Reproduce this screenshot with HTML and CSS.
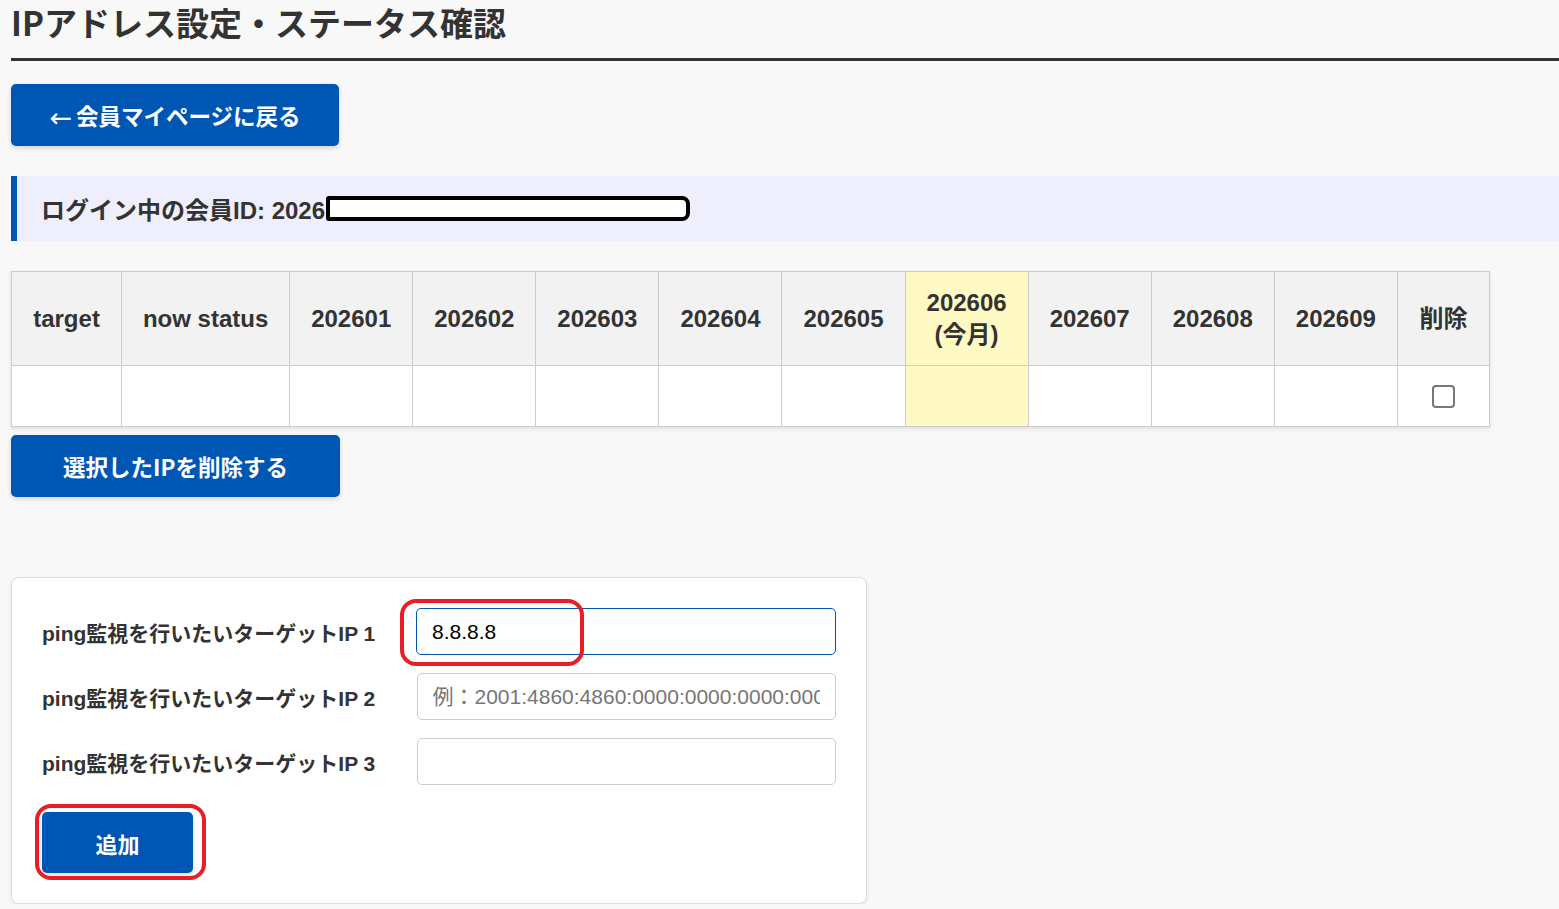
FILE: index.html
```html
<!DOCTYPE html>
<html lang="ja">
<head>
    <meta charset="UTF-8">
    <title>IPアドレス設定・ステータス確認</title>
    <link rel="stylesheet" href="styles.css">
</head>
<body>

<!--ページタイトル-->
<h1 class="page-title">IPアドレス設定・ステータス確認</h1>

<!--戻るボタン-->
<a class="btn btn-back" href="#"><span class="arrow">←</span>会員マイページに戻る</a>

<!--ログイン情報-->
<div class="login-info">
    ログイン中の会員ID: 2026<span class="masked"></span>
</div>

<!--ステータス一覧-->
<form class="status-form">
    <table class="status-table">
        <colgroup>
            <col class="col-target">
            <col class="col-status">
            <col class="col-month">
            <col class="col-month">
            <col class="col-month">
            <col class="col-month">
            <col class="col-month">
            <col class="col-month">
            <col class="col-month">
            <col class="col-month">
            <col class="col-month">
            <col class="col-delete">
        </colgroup>
        <thead>
        <tr>
            <th>target</th>
            <th>now status</th>
            <th>202601</th>
            <th>202602</th>
            <th>202603</th>
            <th>202604</th>
            <th>202605</th>
            <th class="current">202606<br>(今月)</th>
            <th>202607</th>
            <th>202608</th>
            <th>202609</th>
            <th>削除</th>
        </tr>
        </thead>
        <tbody>
        <tr>
            <td></td>
            <td></td>
            <td></td>
            <td></td>
            <td></td>
            <td></td>
            <td></td>
            <td class="current"></td>
            <td></td>
            <td></td>
            <td></td>
            <td><input type="checkbox" class="check"></td>
        </tr>
        </tbody>
    </table>

    <button type="button" class="btn btn-delete">選択したIPを削除する</button>
</form>

<!--ターゲットIP登録-->
<div class="card">
    <div class="field">
        <label class="field-label">ping監視を行いたいターゲットIP 1</label>
        <div class="field-wrap">
            <input class="field-input focused" type="text" value="8.8.8.8">
            <span class="mark mark-input"></span>
        </div>
    </div>
    <div class="field">
        <label class="field-label">ping監視を行いたいターゲットIP 2</label>
        <input class="field-input" type="text" placeholder="例：2001:4860:4860:0000:0000:0000:0000:8888">
    </div>
    <div class="field">
        <label class="field-label">ping監視を行いたいターゲットIP 3</label>
        <input class="field-input" type="text">
    </div>

    <div class="add-wrap">
        <button type="button" class="btn btn-add">追加</button>
        <span class="mark mark-add"></span>
    </div>
</div>

</body>
</html>
```

FILE: styles.css
```css
/*基本設定*/
* {
    margin: 0;
    padding: 0;
    box-sizing: border-box;
}

body {
    background-color: #f8f8f8;
    color: #333;
    font-family: "Liberation Sans", "Noto Sans CJK JP", sans-serif;
    padding-left: 11px;
}

/*タイトル*/
.page-title {
    font-family: "Noto Sans CJK JP", sans-serif;
    font-size: 33px;
    font-weight: bold;
    line-height: 44px;
    padding-bottom: 14px;
    border-bottom: 3px solid #333;
}

/*ボタン共通*/
.btn {
    display: flex;
    align-items: center;
    justify-content: center;
    background-color: #0057b3;
    color: #fff;
    border: none;
    border-radius: 5px;
    font-family: "Noto Sans CJK JP", sans-serif;
    font-size: 22.5px;
    font-weight: bold;
    text-decoration: none;
    box-shadow: 0 2px 5px rgba(0, 0, 0, 0.15);
}

.btn-back {
    width: 328px;
    height: 62px;
    margin-top: 23px;
}

.arrow {
    font-family: "DejaVu Sans", sans-serif;
    font-weight: normal;
    font-size: 27px;
    margin-right: 4px;
    position: relative;
    top: 2px;
}

/*ログイン情報*/
.login-info {
    display: flex;
    align-items: center;
    height: 65px;
    margin-top: 30px;
    padding-left: 24px;
    background-color: #eeeefc;
    border-left: 6px solid #0057b3;
    font-size: 24px;
    font-weight: bold;
}

.masked {
    display: inline-block;
    width: 364px;
    height: 25px;
    margin-left: 1px;
    background-color: #fff;
    border: 4px solid #000;
    border-radius: 3px 8px 8px 3px;
}

/*ステータス表*/
.status-table {
    margin-top: 30px;
    border-collapse: collapse;
    table-layout: fixed;
    width: 1479px;
    background-color: #fff;
    box-shadow: 0 2px 4px rgba(0, 0, 0, 0.1);
}

.col-target { width: 110px; }
.col-status { width: 168px; }
.col-month { width: 123px; }
.col-delete { width: 92px; }

.status-table th,
.status-table td {
    border: 1px solid #ccc;
    text-align: center;
}

.status-table th {
    height: 94px;
    background-color: #f2f2f2;
    font-size: 24px;
    line-height: 32px;
    font-weight: bold;
}

.status-table td {
    height: 61px;
}

.status-table .current {
    background-color: #fff9c4;
}

.check {
    appearance: none;
    display: block;
    margin: 0 auto;
    width: 23px;
    height: 23px;
    border: 2px solid #777;
    border-radius: 4px;
    background-color: #fff;
}

.btn-delete {
    width: 329px;
    height: 62px;
    margin-top: 8px;
}

/*入力カード*/
.card {
    width: 856px;
    margin-top: 80px;
    padding: 30px;
    background-color: #fff;
    border: 1px solid #ddd;
    border-radius: 8px;
    box-shadow: 0 2px 4px rgba(0, 0, 0, 0.08);
}

.field {
    display: flex;
    align-items: center;
    margin-bottom: 18px;
}

.field-label {
    width: 375px;
    font-size: 21px;
    font-weight: bold;
}

.field-wrap {
    position: relative;
}

.field-input {
    display: block;
    width: 420px;
    height: 47px;
    padding: 0 15px;
    border: 1px solid #ccc;
    border-radius: 5px;
    font-family: "Liberation Sans", "Noto Sans CJK JP", sans-serif;
    font-size: 21px;
    color: #000;
    background-color: #fff;
    outline: none;
}

.field-input::placeholder {
    color: #767676;
}

.field-input.focused {
    border-color: #0057b3;
}

.add-wrap {
    position: relative;
    width: 151px;
    margin-top: 27px;
}

.btn-add {
    width: 151px;
    height: 61px;
    font-size: 22px;
}

/*赤枠の注釈*/
.mark {
    position: absolute;
    border: 4px solid #e81d25;
    border-radius: 16px;
    pointer-events: none;
}

.mark-input {
    left: -16px;
    top: -9px;
    width: 184px;
    height: 67px;
}

.mark-add {
    left: -7px;
    top: -8px;
    width: 171px;
    height: 76px;
}
```
